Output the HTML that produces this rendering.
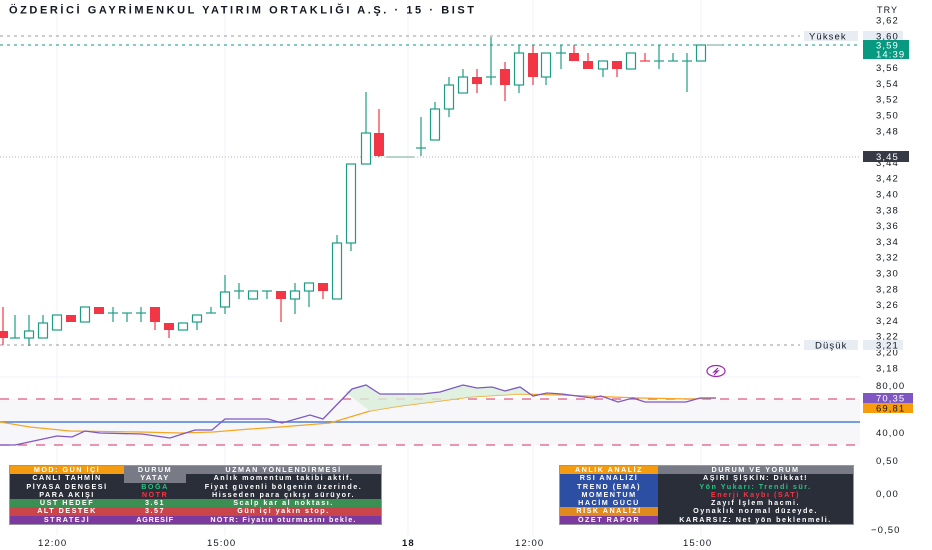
<!DOCTYPE html>
<html><head><meta charset="utf-8">
<style>
body{margin:0;background:#fff;width:932px;height:550px;overflow:hidden;font-family:"Liberation Sans","DejaVu Sans",sans-serif;}
svg text{font-family:"Liberation Sans","DejaVu Sans",sans-serif;}
.tb{position:absolute;border:1px solid #9598a1;font-size:7.2px;color:#fff;letter-spacing:1.5px;font-weight:bold;}
.tb div.r{display:flex;height:8.3px;line-height:8.3px;}
.tb div.r span{display:block;text-align:center;white-space:nowrap;overflow:hidden;}
.ax{letter-spacing:1.1px}
</style></head><body>
<svg id="s" width="932" height="550" style="position:absolute;left:0;top:0">
<g stroke="#f0f3fa" stroke-width="1">
<line x1="57" y1="0" x2="57" y2="535"/><line x1="225" y1="0" x2="225" y2="535"/>
<line x1="408" y1="0" x2="408" y2="535"/><line x1="533" y1="0" x2="533" y2="535"/>
<line x1="701" y1="0" x2="701" y2="535"/>
<line x1="0" y1="377" x2="860" y2="377"/>
</g>
<rect x="0" y="399" width="860" height="46" fill="#f7f7fa"/>
<line x1="0" y1="36" x2="800" y2="36" stroke="#9598a1" stroke-dasharray="3,4"/>
<line x1="0" y1="45" x2="860" y2="45" stroke="#089981" stroke-dasharray="3,4"/>
<line x1="0" y1="157" x2="860" y2="157" stroke="#b2b5be" stroke-dasharray="1,2"/>
<line x1="0" y1="345" x2="800" y2="345" stroke="#9598a1" stroke-dasharray="3,4"/>
<line x1="0" y1="399" x2="860" y2="399" stroke="#e0577f" stroke-dasharray="9,9" stroke-width="1.3"/>
<line x1="0" y1="445" x2="860" y2="445" stroke="#e0577f" stroke-dasharray="9,9" stroke-width="1.3"/>
<line x1="0" y1="422" x2="860" y2="422" stroke="#4a7fd6" stroke-width="1.5"/>
<g id="cd"></g>
<polyline fill="none" stroke="#f5a623" stroke-width="1.2" points="0,422 30,427 70,431 140,432 180,433 213,432 250,429 280,427 330,423 370,411 400,406 440,401 470,397 520,394 560,395 640,398 690,399 716,398"/>
<polygon fill="#d9eed9" opacity="0.8" points="345,392 352,389 366,385 380,394 422,394 440,392 463,385 477,388 492,387 505,391 520,387 530,394 520,394 470,397 440,401 400,406 370,411"/>
<polyline fill="none" stroke="#7e57c2" stroke-width="1.3" points="0,445 15,445 57,436 72,437 85,431 100,433 142,434 170,438 195,430 212,430 225,419 268,419 282,423 310,415 323,419 352,389 366,385 380,394 422,394 440,392 463,385 477,388 492,387 505,391 520,387 533,396 547,393 562,394 592,398 601,396 618,402 633,398 645,402 686,402 700,398 716,398"/>
<ellipse cx="716" cy="371" rx="9" ry="5.5" fill="none" stroke="#9c27b0" stroke-width="1.2"/>
<path d="M718,368 L714,372 L718,371 L714,375" fill="none" stroke="#9c27b0" stroke-width="1.2"/>
<text x="9" y="13.5" font-size="11" font-weight="bold" fill="#131722" textLength="465" lengthAdjust="spacing">ÖZDERİCİ GAYRİMENKUL YATIRIM ORTAKLIĞI A.Ş. · 15 · BIST</text>
<text x="877" y="13" font-size="9" fill="#131722" class="ax">TRY</text>
<g id="ax" font-size="9.5" fill="#131722" class="ax"></g>
<g class="ax">
<rect x="804" y="31" width="54" height="10" fill="#e8ecf3"/><text x="809" y="39.5" font-size="9.5" fill="#131722">Yüksek</text>
<rect x="804" y="340" width="54" height="10" fill="#e8ecf3"/><text x="815" y="348.5" font-size="9.5" fill="#131722">Düşük</text>
<rect x="863" y="31" width="40" height="10" fill="#e8ecf3"/><text x="876" y="39.5" font-size="9.5" fill="#131722">3,60</text>
<rect x="863" y="340" width="40" height="10" fill="#e8ecf3"/><text x="876" y="348.5" font-size="9.5" fill="#131722">3,21</text>
<rect x="863" y="40" width="46" height="19" fill="#089981"/><text x="876" y="48.5" font-size="9.5" fill="#fff">3,59</text><text x="876" y="57.5" font-size="9.5" fill="#fff">14:39</text>
<rect x="863" y="151" width="46" height="11" fill="#363a45"/><text x="876" y="160" font-size="9.5" fill="#fff">3,45</text>
<rect x="863" y="393" width="50" height="10" fill="#7e57c2"/><text x="876" y="401.5" font-size="9.5" fill="#fff">70,35</text>
<rect x="863" y="403" width="50" height="10" fill="#f79d0c"/><text x="876" y="411.5" font-size="9.5" fill="#131722">69,81</text>
<text x="876" y="389" font-size="9.5" fill="#131722">80,00</text>
<text x="876" y="436" font-size="9.5" fill="#131722">40,00</text>
<text x="876" y="464" font-size="9.5" fill="#131722">0,50</text>
<text x="876" y="497" font-size="9.5" fill="#131722">0,00</text>
<text x="871" y="533" font-size="9.5" fill="#131722">−0,50</text>
</g>
<g font-size="9.5" fill="#131722" class="ax">
<text x="38" y="546">12:00</text><text x="207" y="546">15:00</text><text x="402" y="546" font-weight="bold">18</text><text x="515" y="546">12:00</text><text x="683" y="546">15:00</text>
</g>
</svg>

<div class="tb" style="left:9px;top:465px;width:371px;background:#2a2e39">
<div class="r"><span style="width:114px;background:#f39c12">MOD: GÜN İÇİ</span><span style="width:62px;background:#787b86">DURUM</span><span style="flex:1;background:#787b86">UZMAN YÖNLENDİRMESİ</span></div>
<div class="r"><span style="width:114px">CANLI TAHMİN</span><span style="width:62px;background:#787b86">YATAY</span><span style="flex:1">Anlık momentum takibi aktif.</span></div>
<div class="r"><span style="width:114px">PİYASA DENGESİ</span><span style="width:62px;color:#26c281">BOĞA</span><span style="flex:1">Fiyat güvenli bölgenin üzerinde.</span></div>
<div class="r"><span style="width:114px">PARA AKIŞI</span><span style="width:62px;color:#f23645">NÖTR</span><span style="flex:1">Hisseden para çıkışı sürüyor.</span></div>
<div class="r" style="background:#3b8f52"><span style="width:114px">ÜST HEDEF</span><span style="width:62px">3.61</span><span style="flex:1">Scalp kar al noktası.</span></div>
<div class="r" style="background:#c9454a"><span style="width:114px">ALT DESTEK</span><span style="width:62px">3.57</span><span style="flex:1">Gün içi yakın stop.</span></div>
<div class="r" style="background:#7d3a9e"><span style="width:114px">STRATEJİ</span><span style="width:62px;letter-spacing:0.8px">AGRESİF</span><span style="flex:1;letter-spacing:1.2px">NÖTR: Fiyatın oturmasını bekle.</span></div>
</div>

<div class="tb" style="left:559px;top:465px;width:293px;background:#2a2e39">
<div class="r"><span style="width:98px;background:#f39c12">ANLIK ANALİZ</span><span style="flex:1;background:#787b86">DURUM VE YORUM</span></div>
<div class="r"><span style="width:98px;background:#2c4fa3">RSI ANALİZİ</span><span style="flex:1">AŞIRI ŞİŞKİN: Dikkat!</span></div>
<div class="r"><span style="width:98px;background:#2c4fa3">TREND (EMA)</span><span style="flex:1;color:#26c281">Yön Yukarı: Trendi sür.</span></div>
<div class="r"><span style="width:98px;background:#2c4fa3">MOMENTUM</span><span style="flex:1;color:#f23645">Enerji Kaybı (SAT)</span></div>
<div class="r"><span style="width:98px;background:#2c4fa3">HACİM GÜCÜ</span><span style="flex:1">Zayıf İşlem hacmi.</span></div>
<div class="r"><span style="width:98px;background:#e08a1e">RİSK ANALİZİ</span><span style="flex:1">Oynaklık normal düzeyde.</span></div>
<div class="r"><span style="width:98px;background:#7d3a9e">ÖZET RAPOR</span><span style="flex:1">KARARSIZ: Net yön beklenmeli.</span></div>
</div>

<script>
var ns="http://www.w3.org/2000/svg";
function el(p,t,a){var e=document.createElementNS(ns,t);for(var k in a)e.setAttribute(k,a[k]);p.appendChild(e);return e;}
var G="#1f9d84",R="#f23645";
var C=[[3,307,345,331,338,'r'],[15,315,338,338,338,'d'],[29,315,346,331,338,'g'],[43,315,338,323,338,'g'],[57,315,330,315,330,'g'],
[71,315,322,315,322,'r'],[85,307,322,307,322,'g'],[99,307,314,307,314,'r'],[113,307,322,313,313,'d'],[127,313,322,313,313,'d'],
[141,307,322,313,313,'d'],[155,307,330,307,322,'r'],[169,323,338,323,330,'r'],[183,323,330,323,330,'g'],[197,315,330,315,322,'g'],
[211,307,313,313,313,'d'],[225,275,314,292,307,'g'],[239,283,299,291,291,'d'],[253,291,299,291,299,'g'],[267,291,299,291,291,'d'],
[281,291,322,291,299,'r'],[295,283,314,291,299,'g'],[309,283,307,283,291,'g'],[323,283,299,283,291,'r'],[337,235,299,243,299,'g'],
[351,164,251,164,243,'g'],[366,92,164,133,164,'g'],[379,109,157,133,156,'r'],[393,157,157,157,157,'f'],[407,157,157,157,157,'f'],
[421,117,156,148,148,'d'],[435,102,140,109,140,'g'],[449,77,117,85,109,'g'],[463,69,93,77,93,'g'],[477,69,93,77,84,'r'],
[491,37,85,77,77,'d'],[505,62,101,69,85,'r'],[519,45,93,53,85,'g'],[533,45,85,53,77,'r'],[546,53,85,53,77,'g'],
[561,45,69,53,53,'d'],[574,45,61,53,61,'r'],[588,53,69,61,69,'r'],[603,61,77,61,69,'g'],[617,61,77,61,69,'r'],
[631,53,69,53,69,'g'],[645,53,61,61,61,'rd'],[659,45,69,61,61,'d'],[673,53,61,61,61,'d'],[687,53,92,61,61,'d'],[701,45,61,45,61,'g'],[715,45,45,45,45,'f']];
var g=document.getElementById('cd');
C.forEach(function(c){var x=c[0],t=c[5];var col=(t=='r'||t=='rd')?R:G;
 if(t=='f'){el(g,'line',{x1:x-7,y1:c[1],x2:x+7,y2:c[1],stroke:'#6fa89a','stroke-width':1});return;}
 el(g,'line',{x1:x,y1:c[1],x2:x,y2:c[2],stroke:col,'stroke-width':1.2});
 if(t=='d'||t=='rd'){el(g,'line',{x1:x-5,y1:c[3],x2:x+5,y2:c[3],stroke:col,'stroke-width':1.2});return;}
 var h=Math.max(c[4]-c[3],1.5);
 if(t=='g')el(g,'rect',{x:x-4.5,y:c[3],width:9,height:h,fill:'#fff',stroke:G,'stroke-width':1.2});
 else el(g,'rect',{x:x-5,y:c[3],width:10,height:h,fill:R});
});
var ax=document.getElementById('ax');
for(var i=0;i<=22;i++){var p=3.62-i*0.02;var y=36+(3.60-p)*790;
 var lbl=p.toFixed(2).replace('.',',');
 if(lbl=='3,60'||lbl=='3,58'||lbl=='3,46')continue;
 var t=el(ax,'text',{x:876,y:(y+3.5).toFixed(1)});t.textContent=lbl;}
</script>
</body></html>
